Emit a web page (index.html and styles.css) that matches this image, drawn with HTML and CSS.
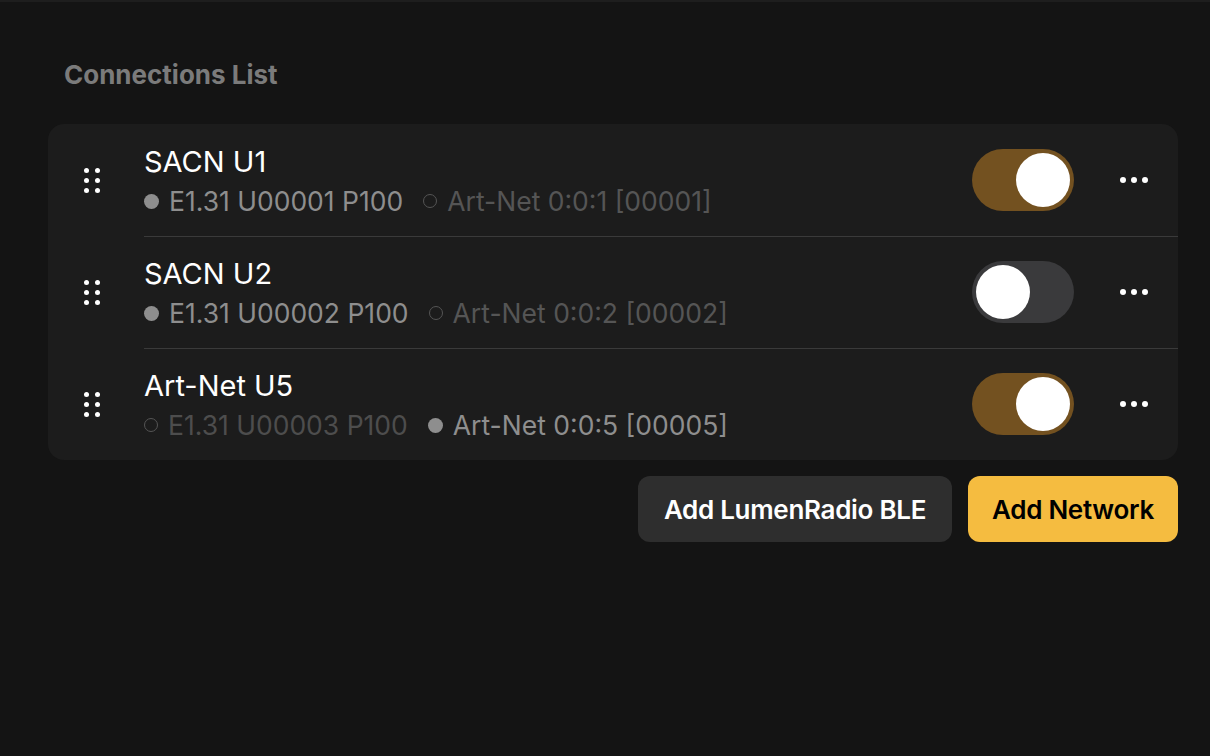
FILE: index.html
```html
<!DOCTYPE html>
<html>
<head>
<meta charset="utf-8">
<link rel="stylesheet" href="styles.css">
</head>
<body>
<div class="page">
  <h1 class="title">Connections List</h1>
  <div class="card">
    <div class="row">
      <div class="handle"><span></span><span></span><span></span><span></span><span></span><span></span></div>
      <div class="info">
        <div class="name">SACN U1</div>
        <div class="sub">
          <span class="proto on"><i class="dot"></i>E1.31 U00001 P100</span>
          <span class="proto off"><i class="dot"></i>Art-Net 0:0:1 [00001]</span>
        </div>
      </div>
      <div class="toggle on"><span class="knob"></span></div>
      <div class="more"><span></span><span></span><span></span></div>
    </div>
    <div class="row">
      <div class="handle"><span></span><span></span><span></span><span></span><span></span><span></span></div>
      <div class="info">
        <div class="name">SACN U2</div>
        <div class="sub">
          <span class="proto on"><i class="dot"></i>E1.31 U00002 P100</span>
          <span class="proto off"><i class="dot"></i>Art-Net 0:0:2 [00002]</span>
        </div>
      </div>
      <div class="toggle"><span class="knob"></span></div>
      <div class="more"><span></span><span></span><span></span></div>
    </div>
    <div class="row">
      <div class="handle"><span></span><span></span><span></span><span></span><span></span><span></span></div>
      <div class="info">
        <div class="name">Art-Net U5</div>
        <div class="sub">
          <span class="proto off dim"><i class="dot"></i>E1.31 U00003 P100</span>
          <span class="proto on"><i class="dot"></i>Art-Net 0:0:5 [00005]</span>
        </div>
      </div>
      <div class="toggle on"><span class="knob"></span></div>
      <div class="more"><span></span><span></span><span></span></div>
    </div>
  </div>
  <div class="actions">
    <button class="btn secondary">Add LumenRadio BLE</button>
    <button class="btn primary">Add Network</button>
  </div>
</div>
</body>
</html>
```
FILE: styles.css
```css
* { box-sizing: border-box; }
html, body { margin: 0; padding: 0; }
body {
  background: #141414;
  font-family: Inter, "Noto Sans", sans-serif;
  color: #fff;
  width: 1210px;
  height: 756px;
  overflow: hidden;
  border-top: 2px solid #1e1e1e;
}
.page {
  padding: 0 32px 0 48px;
}
.title {
  margin: 0;
  padding: 56px 0 0 16px;
  height: 122px;
  font-size: 26px;
  font-weight: 700;
  color: #7b7b7b;
  letter-spacing: 0;
  line-height: 34px;
}
.card {
  background: #1c1c1c;
  border-radius: 16px;
  overflow: hidden;
}
.row {
  display: flex;
  align-items: center;
  height: 112px;
  position: relative;
}
.row + .row::before {
  content: "";
  position: absolute;
  top: 0;
  left: 96px;
  right: 0;
  height: 1px;
  background: #3a3a3a;
}
.handle {
  width: 96px;
  display: grid;
  grid-template-columns: 5px 5px;
  grid-template-rows: 5px 5px 5px;
  column-gap: 6px;
  row-gap: 5px;
  justify-content: center;
  padding-right: 8px;
}
.handle span {
  width: 5px;
  height: 5px;
  border-radius: 50%;
  background: #fff;
}
.info {
  flex: 1;
  padding-top: 2px;
}
.name {
  font-size: 29px;
  line-height: 34px;
  color: #fff;
  letter-spacing: 0;
}
.sub {
  display: flex;
  gap: 20px;
  font-size: 26.5px;
  line-height: 32px;
  margin-top: 6px;
  letter-spacing: 0;
}
.proto {
  display: flex;
  align-items: center;
  gap: 10px;
}
.proto .dot {
  width: 15px;
  height: 15px;
  border-radius: 50%;
  display: inline-block;
  flex: none;
}
.proto.on { color: #8e8e8e; }
.proto.on .dot { background: #8e8e8e; }
.proto.off { color: #555; }
.proto.off .dot {
  width: 14px; height: 14px;
  border: 1.5px solid #555;
}
.proto.dim { color: #4d4d4d; }
.toggle {
  width: 102px;
  height: 62px;
  border-radius: 31px;
  background: #3a3a3c;
  padding: 4px;
  display: flex;
  margin-right: 44px;
}
.toggle.on {
  background: #735120;
  justify-content: flex-end;
}
.knob {
  width: 54px;
  height: 54px;
  border-radius: 50%;
  background: #fff;
}
.more {
  width: 60px;
  display: flex;
  gap: 5px;
  justify-content: flex-start;
  padding-left: 2px;
}
.more span {
  width: 6px;
  height: 6px;
  border-radius: 50%;
  background: #fff;
}
.actions {
  display: flex;
  justify-content: flex-end;
  gap: 16px;
  margin-top: 16px;
}
.btn {
  height: 66px;
  border: none;
  border-radius: 12px;
  font-family: Inter, "Noto Sans", sans-serif;
  font-size: 26px;
  font-weight: 600;
  padding: 0 20px;
  letter-spacing: -0.3px;
}
.btn.secondary { background: #2e2e2e; color: #fff; width: 314px; }
.btn.primary { background: #f5bc40; color: #000; width: 210px; }
```
